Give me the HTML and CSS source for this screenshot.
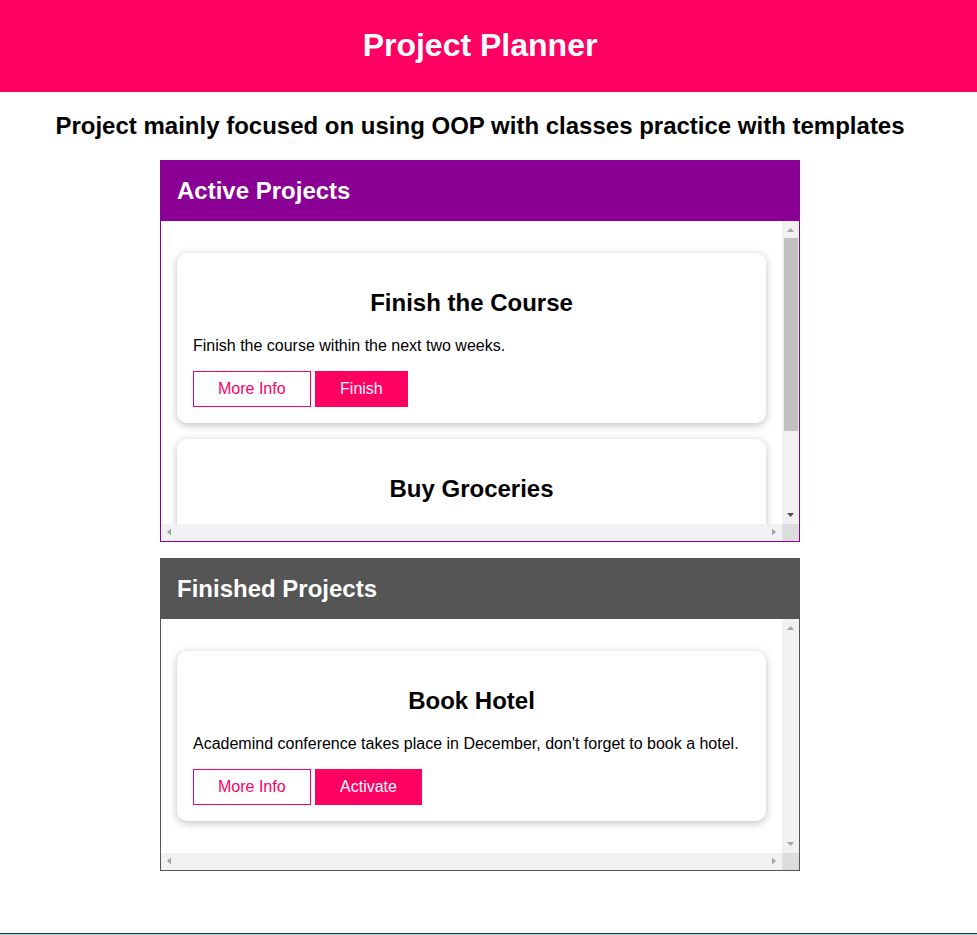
FILE: index.html
```html
<!DOCTYPE html>
<html lang="en">
<head>
<meta charset="utf-8">
<title>Project Planner</title>
<link rel="stylesheet" href="styles.css">
</head>
<body>
<header class="app-header">
  <h1>Project Planner</h1>
</header>
<main class="page">
  <h2 class="subtitle">Project mainly focused on using OOP with classes practice with templates</h2>
  <section class="projects active">
    <header class="projects-head"><h2>Active Projects</h2></header>
    <div class="list-frame">
      <ul class="project-list">
        <li class="card">
          <h2>Finish the Course</h2>
          <p>Finish the course within the next two weeks.</p>
          <button class="alt">More Info</button>
          <button>Finish</button>
        </li>
        <li class="card">
          <h2>Buy Groceries</h2>
          <p>Don't forget to pick up groceries today.</p>
          <button class="alt">More Info</button>
          <button>Finish</button>
        </li>
      </ul>
      <div class="vbar">
        <span class="sb-btn"><svg width="17" height="17" viewBox="0 0 17 17"><polygon points="5,11 12,11 8.5,7" fill="#a3a3a3"/></svg></span>
        <span class="sb-track"><span class="thumb"></span></span>
        <span class="sb-btn"><svg width="17" height="17" viewBox="0 0 17 17"><polygon points="5,6 12,6 8.5,10" fill="#505050"/></svg></span>
      </div>
      <div class="hbar">
        <span class="sb-btn"><svg width="17" height="17" viewBox="0 0 17 17"><polygon points="10,4.5 10,11.5 6,8" fill="#a3a3a3"/></svg></span>
        <span class="sb-track"></span>
        <span class="sb-btn"><svg width="17" height="17" viewBox="0 0 17 17"><polygon points="7,4.5 7,11.5 11,8" fill="#a3a3a3"/></svg></span>
      </div>
      <div class="corner"></div>
    </div>
  </section>
  <section class="projects finished">
    <header class="projects-head"><h2>Finished Projects</h2></header>
    <div class="list-frame">
      <ul class="project-list">
        <li class="card">
          <h2>Book Hotel</h2>
          <p>Academind conference takes place in December, don't forget to book a hotel.</p>
          <button class="alt">More Info</button>
          <button>Activate</button>
        </li>
      </ul>
      <div class="vbar">
        <span class="sb-btn"><svg width="17" height="17" viewBox="0 0 17 17"><polygon points="5,11 12,11 8.5,7" fill="#a3a3a3"/></svg></span>
        <span class="sb-track"></span>
        <span class="sb-btn"><svg width="17" height="17" viewBox="0 0 17 17"><polygon points="5,6 12,6 8.5,10" fill="#a3a3a3"/></svg></span>
      </div>
      <div class="hbar">
        <span class="sb-btn"><svg width="17" height="17" viewBox="0 0 17 17"><polygon points="10,4.5 10,11.5 6,8" fill="#a3a3a3"/></svg></span>
        <span class="sb-track"></span>
        <span class="sb-btn"><svg width="17" height="17" viewBox="0 0 17 17"><polygon points="7,4.5 7,11.5 11,8" fill="#a3a3a3"/></svg></span>
      </div>
      <div class="corner"></div>
    </div>
  </section>
</main>
<footer class="bottom-bar"></footer>
</body>
</html>
```
FILE: styles.css
```css
* { box-sizing: border-box; }
html, body { margin: 0; padding: 0; }
body {
  font-family: "Liberation Sans", Arial, sans-serif;
  color: #000;
  background: #fff;
}
.app-header {
  background: #ff0062;
  color: #fff;
  padding: 27px 17px 28px 0;
  text-align: center;
}
.app-header h1 {
  margin: 0;
  font-size: 32px;
  line-height: 37px;
}
.page {
  width: 960px;
  padding-bottom: 46px;
}
.subtitle {
  text-align: center;
  font-size: 24px;
  line-height: 28px;
  margin: 20px 0;
}
.projects {
  width: 640px;
  margin: 0 auto 16px 160px;
  border: 1px solid #8a0094;
}
.projects.finished { border-color: #555; }
.projects-head {
  background: #8a0094;
  color: #fff;
  padding: 16px;
}
.finished .projects-head { background: #555; }
.projects-head h2 {
  margin: 0;
  font-size: 24px;
  line-height: 28px;
}
.list-frame {
  display: grid;
  grid-template-columns: 1fr 17px;
  grid-template-rows: auto 17px;
}
.active .list-frame { grid-template-rows: 303px 17px; }
.project-list {
  list-style: none;
  margin: 0;
  padding: 16px;
  overflow: hidden;
}
.vbar {
  display: flex;
  flex-direction: column;
  background: #f1f1f1;
}
.hbar {
  display: flex;
  background: #f1f1f1;
}
.sb-btn {
  flex: 0 0 17px;
  width: 17px;
  height: 17px;
  display: block;
}
.sb-btn svg { display: block; }
.sb-track {
  flex: 1 1 auto;
  display: block;
  background: #f1f1f1;
}
.thumb {
  display: block;
  height: 193px;
  margin: 0 1px 0 2px;
  background: #c1c1c1;
}
.corner { background: #dcdcdc; }
.card {
  margin: 16px 0;
  padding: 16px;
  border-radius: 10px;
  box-shadow: 0 2px 8px rgba(0,0,0,0.26);
  background: #fff;
}
.card h2 {
  text-align: center;
  font-size: 24px;
  line-height: 28px;
  margin: 20px 0;
}
.card p {
  font-size: 16px;
  line-height: 18px;
  margin: 16px 0;
}
.card button {
  font: inherit;
  font-size: 16px;
  line-height: 18px;
  padding: 8px 24px;
  border: 1px solid #ff0062;
  background: #ff0062;
  color: #fff;
  cursor: pointer;
}
.card button.alt {
  background: #fff;
  color: #ff0062;
}
.bottom-bar {
  height: 2px;
  border-top: 1px solid #1f3436;
  background: #9fd9db;
}
```
